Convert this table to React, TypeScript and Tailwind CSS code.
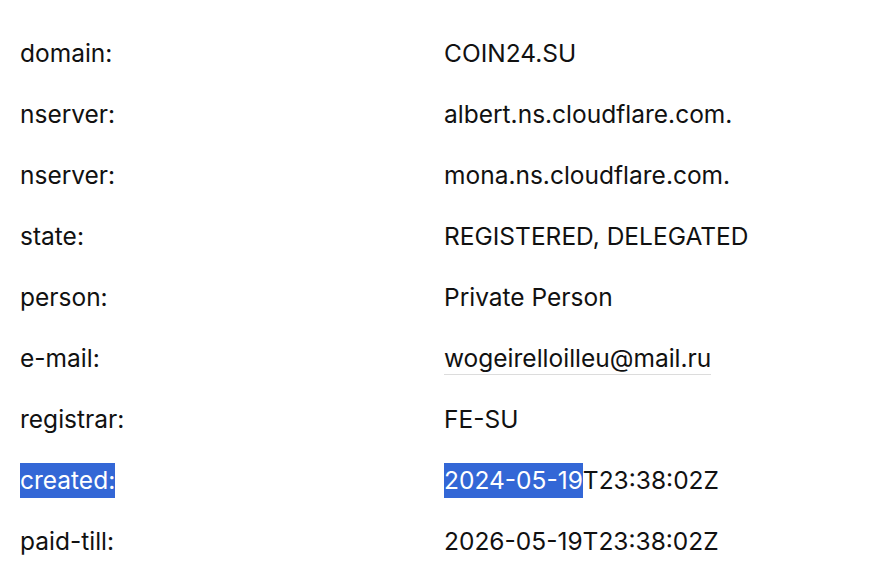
import React from "react";

type Row = {
  label: string;
  value: string;
  selected?: boolean;
  underline?: boolean;
};

const rows: Row[] = [
  { label: "domain:", value: "COIN24.SU" },
  { label: "nserver:", value: "albert.ns.cloudflare.com." },
  { label: "nserver:", value: "mona.ns.cloudflare.com." },
  { label: "state:", value: "REGISTERED, DELEGATED" },
  { label: "person:", value: "Private Person" },
  { label: "e-mail:", value: "wogeirelloilleu@mail.ru", underline: true },
  { label: "registrar:", value: "FE-SU" },
  { label: "created:", value: "2024-05-19T23:38:02Z", selected: true },
  { label: "paid-till:", value: "2026-05-19T23:38:02Z" },
];

export default function App() {
  return (
    <div className="w-[892px] h-[580px] bg-white text-[#111] overflow-hidden pt-[36px] pl-[20px] font-[Inter,sans-serif]">
      <div className="flex flex-col gap-[26px]">
        {rows.map((r, i) => (
          <div key={i} className="flex h-[35px] text-[24.5px] leading-[35px]">
            {/* label */}
            <div className="w-[424px] shrink-0">
              {r.selected ? (
                <span className="inline-block bg-[#3367d6] text-white">{r.label}</span>
              ) : (
                r.label
              )}
            </div>
            {/* value */}
            <div>
              {r.selected ? (
                <>
                  <span className="inline-block bg-[#3367d6] text-white">
                    {r.value.slice(0, 10)}
                  </span>
                  {r.value.slice(10)}
                </>
              ) : r.underline ? (
                <span className="inline-block leading-[31px] border-b border-[#dcdcdc]">
                  {r.value}
                </span>
              ) : (
                r.value
              )}
            </div>
          </div>
        ))}
      </div>
    </div>
  );
}
